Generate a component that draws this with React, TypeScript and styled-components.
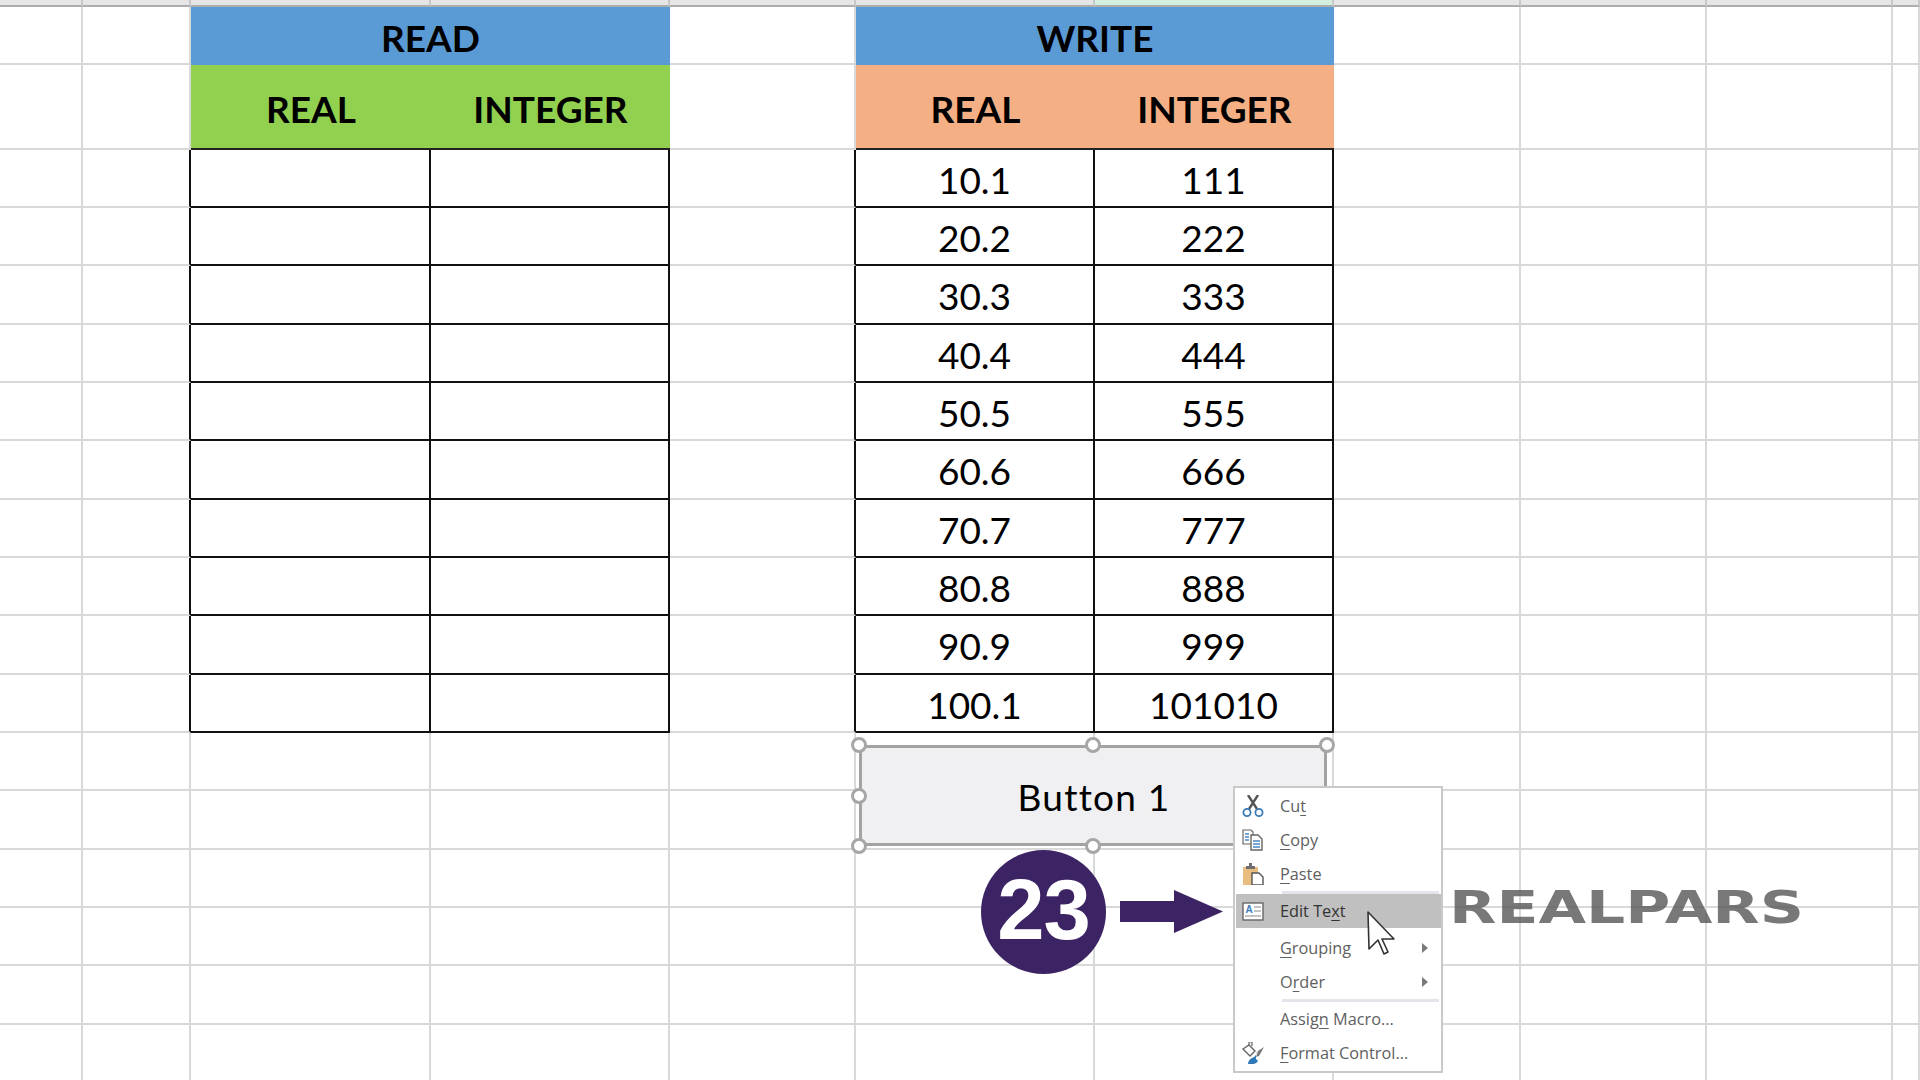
import { ReactNode } from "react";
import styled, { createGlobalStyle } from "styled-components";

const GlobalStyle = createGlobalStyle`
  html, body {
    margin: 0;
    padding: 0;
    background: #fff;
    overflow: hidden;
  }
  * { box-sizing: border-box; }
`;

const GRID_LINE = "#d9d9d9";
const INK = "#111";
const COLUMN_COUNT = 11;
const READ_COLS = [2, 3];
const WRITE_COLS = [5, 6];

const Sheet = styled.div`
  position: relative;
  width: 1920px;
  height: 1080px;
  overflow: hidden;
  display: grid;
  grid-template-columns: 83px 108px 240px 239px 186px 239px 239px 187px 186px 186px 27px;
  grid-template-rows: 7px 58px 84.5px repeat(16, 58.35px);
  font-family: Lato, "Liberation Sans", sans-serif;
  color: #000;
`;

const TopCell = styled.div<{ $selected?: boolean }>`
  background: ${(p) => (p.$selected ? "#d3f0de" : "#e6e6e6")};
  border-right: 2px solid #c8c8c8;
  border-bottom: 2px solid #adadad;
`;

const Cell = styled.div<{ $edge?: boolean }>`
  border-right: 2px solid ${(p) => (p.$edge ? INK : GRID_LINE)};
  border-bottom: 2px solid ${GRID_LINE};
`;

const TitleCell = styled.div`
  grid-column: span 2;
  background: #5b9bd5;
  display: flex;
  align-items: center;
  justify-content: center;
  padding-top: 2px;
  font-size: 37px;
  font-weight: 700;
`;

const HeadCell = styled.div<{ $tone: string }>`
  background: ${(p) => p.$tone};
  border-bottom: 2px solid #222;
  display: flex;
  align-items: center;
  justify-content: center;
  padding-top: 4px;
  font-size: 37px;
  font-weight: 700;
`;

const DataCell = styled.div`
  border-right: 2px solid ${INK};
  border-bottom: 2px solid ${INK};
  display: flex;
  align-items: center;
  justify-content: center;
  padding-top: 3px;
  font-size: 37px;
`;

const FormButton = styled.div`
  position: absolute;
  left: 859px;
  top: 745px;
  width: 468px;
  height: 101px;
  background: #f0f0f2;
  border: 3px solid #a3a3a3;
  display: flex;
  align-items: center;
  justify-content: center;
  font-size: 37px;
  letter-spacing: 1.2px;
  padding: 2px 0 0 2px;
`;

// the offsets are taken from the button's outer edge, not its padding box
const Handle = styled.span<{ $x: number; $y: number }>`
  position: absolute;
  left: calc(-3px + (100% + 6px) * ${(p) => p.$x});
  top: calc(-3px + (100% + 6px) * ${(p) => p.$y});
  width: 16px;
  height: 16px;
  margin: -8px 0 0 -8px;
  border-radius: 50%;
  background: #fff;
  border: 3px solid #a6a6a6;
`;

const Badge = styled.div`
  position: absolute;
  left: 981px;
  top: 850px;
  width: 125px;
  height: 124px;
  border-radius: 50%;
  background: #3c2464;
  color: #fff;
  display: flex;
  align-items: center;
  justify-content: center;
  padding-bottom: 5px;
  font-family: "Liberation Sans", Arial, sans-serif;
  font-weight: 700;
  font-size: 85px;
  letter-spacing: -1px;
`;

const ArrowMark = styled.svg`
  position: absolute;
  left: 1120px;
  top: 890px;
`;

const Logo = styled.svg`
  position: absolute;
  left: 1446px;
  top: 880px;
`;

const Menu = styled.div`
  position: absolute;
  left: 1233px;
  top: 786px;
  width: 210px;
  height: 287px;
  background: #fff;
  border: 2px solid #c9c9c9;
  padding: 1px 0 0 1px;
  font-family: "Open Sans", "Noto Sans", sans-serif;
  font-size: 16.3px;
  color: #606060;
`;

const MenuItem = styled.div<{ $active?: boolean; $gapAfter?: number }>`
  display: flex;
  align-items: center;
  gap: 16px;
  width: 205px;
  height: 34px;
  padding: 0 14px 0 6px;
  margin-bottom: ${(p) => p.$gapAfter ?? 0}px;
  background: ${(p) => (p.$active ? "#c0c0c0" : "transparent")};
  color: ${(p) => (p.$active ? "#333" : "inherit")};
`;

const IconSlot = styled.span`
  width: 22px;
  height: 22px;
  flex: none;
  display: flex;
  align-items: center;
`;

const AccessKey = styled.span`
  text-decoration: underline;
  text-underline-offset: 3px;
`;

const SubArrow = styled.span`
  margin-left: auto;
  margin-right: -1px;
  width: 0;
  height: 0;
  border-left: 6px solid #7a7a7a;
  border-top: 5px solid transparent;
  border-bottom: 5px solid transparent;
`;

const MenuRule = styled.div`
  height: 3px;
  margin-left: 46px;
  margin-right: 2px;
  background: #e4e4ea;
`;

const Pointer = styled.svg`
  position: absolute;
  left: 1367px;
  top: 911px;
`;

const CutIcon = () => (
  <svg width="22" height="22" viewBox="0 0 22 22" fill="none">
    <path d="M7 14 16 0M15 14 6 0" stroke="#555" strokeWidth="2.4" />
    <circle cx="5" cy="17.500" r="3.600" stroke="#3b7bb8" strokeWidth="1.800" />
    <circle cx="17" cy="17.500" r="3.600" stroke="#3b7bb8" strokeWidth="1.800" />
  </svg>
);

const CopyIcon = () => (
  <svg width="22" height="22" viewBox="0 0 22 22" fill="none">
    <path d="M1 1h8l2 2v12H1z" fill="#fff" stroke="#666" strokeWidth="1.2" />
    <path d="M3 5h4M3 8h4M3 11h4" stroke="#4a86c5" strokeWidth="1.4" />
    <path d="M9 6h7l4 4v11H9z" fill="#fff" stroke="#666" strokeWidth="1.4" />
    <path d="M11 12h7M11 15h7M11 18h7" stroke="#4a86c5" strokeWidth="1.4" />
  </svg>
);

const PasteIcon = () => (
  <svg width="22" height="22" viewBox="0 0 22 22" fill="none">
    <rect x="1" y="4" width="15" height="18" fill="#e9bd80" />
    <rect x="4" y="3" width="9" height="3" fill="#6e6e6e" />
    <rect x="7" y="0" width="3" height="3" fill="#6e6e6e" />
    <path d="M10 10h7l4 4v8H10z" fill="#fff" stroke="#555" strokeWidth="1.400" />
  </svg>
);

const EditIcon = () => (
  <svg width="22" height="22" viewBox="0 0 22 22" fill="none">
    <rect x="1" y="3" width="20" height="17" fill="#fff" stroke="#666" strokeWidth="1.4" />
    <text x="3.500" y="12.500" fontFamily="Liberation Sans" fontWeight="700" fontSize="10" fill="#3b7bb8">
      A
    </text>
    <path d="M12 7h7M12 11h7M3 16h16" stroke="#8a8a8a" strokeWidth="1.2" />
  </svg>
);

const FormatIcon = () => (
  <svg width="22" height="22" viewBox="0 0 22 22" fill="none">
    <path d="M1 7 7 3l6 6-5 5z" fill="#fff" stroke="#666" strokeWidth="1.400" />
    <path d="M7 3V0h3v4" stroke="#666" strokeWidth="1.200" />
    <path d="M22 5 16 9l-2 6 3-1z" fill="#777" />
    <path d="M14 9c1 4-1 6-4 7-2 1-4 3-4 6 4 1 8 0 10-3l-2-2z" fill="#2f78b8" />
  </svg>
);

const readRows = Array.from({ length: 10 }, () => ["", ""]);
const writeRows = [
  ["10.1", "111"],
  ["20.2", "222"],
  ["30.3", "333"],
  ["40.4", "444"],
  ["50.5", "555"],
  ["60.6", "666"],
  ["70.7", "777"],
  ["80.8", "888"],
  ["90.9", "999"],
  ["100.1", "101010"],
];

const handles = [
  [0, 0],
  [0.5, 0],
  [1, 0],
  [0, 0.5],
  [0, 1],
  [0.5, 1],
];

// one row of the sheet: blank cells, except where a table covers the column
const sheetRow = (rowIndex: number): ReactNode[] => {
  const cells: ReactNode[] = [];
  const key = (col: number) => `${rowIndex}-${col}`;

  for (let col = 0; col < COLUMN_COUNT; col++) {
    const inRead = READ_COLS.includes(col);
    const inWrite = WRITE_COLS.includes(col);
    const first = col === READ_COLS[0] || col === WRITE_COLS[0];

    if (rowIndex === 0 && (inRead || inWrite)) {
      if (first) cells.push(<TitleCell key={key(col)}>{inRead ? "READ" : "WRITE"}</TitleCell>);
    } else if (rowIndex === 1 && (inRead || inWrite)) {
      cells.push(
        <HeadCell key={key(col)} $tone={inRead ? "#92d14f" : "#f4b084"}>
          {first ? "REAL" : "INTEGER"}
        </HeadCell>
      );
    } else if (rowIndex >= 2 && rowIndex < 12 && (inRead || inWrite)) {
      const row = (inRead ? readRows : writeRows)[rowIndex - 2];
      cells.push(<DataCell key={key(col)}>{row[first ? 0 : 1]}</DataCell>);
    } else {
      const edge = rowIndex >= 2 && rowIndex < 12 && (col === 1 || col === 4);
      cells.push(<Cell key={key(col)} $edge={edge} />);
    }
  }
  return cells;
};

export default function App() {
  return (
    <>
      <GlobalStyle />
      <Sheet>
        {Array.from({ length: COLUMN_COUNT }, (_, col) => (
          <TopCell key={col} $selected={col === 6} />
        ))}
        {Array.from({ length: 18 }, (_, row) => sheetRow(row))}

        <FormButton>
          Button 1
          {handles.map(([x, y]) => (
            <Handle key={`${x}-${y}`} $x={x} $y={y} />
          ))}
        </FormButton>

        <Badge>23</Badge>
        <ArrowMark width="104" height="44" viewBox="0 0 104 44">
          <path d="M0 11h54V0l49 21.500L54 43V32H0z" fill="#3c2464" />
        </ArrowMark>

        <Logo width="362" height="56" viewBox="0 0 362 56">
          <text
            x="3"
            y="43"
            textLength="355"
            lengthAdjust="spacingAndGlyphs"
            fontFamily="DejaVu Sans"
            fontWeight="700"
            fontSize="45"
            fill="#5a5a5a"
            fillOpacity="0.82"
          >
            REALPARS
          </text>
        </Logo>

        <Menu>
          <MenuItem>
            <IconSlot><CutIcon /></IconSlot>
            <span>Cu<AccessKey>t</AccessKey></span>
          </MenuItem>
          <MenuItem>
            <IconSlot><CopyIcon /></IconSlot>
            <span><AccessKey>C</AccessKey>opy</span>
          </MenuItem>
          <MenuItem>
            <IconSlot><PasteIcon /></IconSlot>
            <span><AccessKey>P</AccessKey>aste</span>
          </MenuItem>
          <MenuRule />
          <MenuItem $active $gapAfter={3}>
            <IconSlot><EditIcon /></IconSlot>
            <span>Edit Te<AccessKey>x</AccessKey>t</span>
          </MenuItem>
          <MenuItem>
            <IconSlot />
            <span><AccessKey>G</AccessKey>rouping</span>
            <SubArrow />
          </MenuItem>
          <MenuItem>
            <IconSlot />
            <span>O<AccessKey>r</AccessKey>der</span>
            <SubArrow />
          </MenuItem>
          <MenuRule />
          <MenuItem>
            <IconSlot />
            <span>Assig<AccessKey>n</AccessKey> Macro...</span>
          </MenuItem>
          <MenuItem>
            <IconSlot><FormatIcon /></IconSlot>
            <span><AccessKey>F</AccessKey>ormat Control...</span>
          </MenuItem>
        </Menu>

        <Pointer width="30" height="44" viewBox="0 0 30 44">
          <path
            d="M1 1 2 38l9-9 6 14 4-2-6-13h12z"
            fill="#fff"
            stroke="#333"
            strokeWidth="1.6"
            strokeLinejoin="round"
          />
        </Pointer>
      </Sheet>
    </>
  );
}
